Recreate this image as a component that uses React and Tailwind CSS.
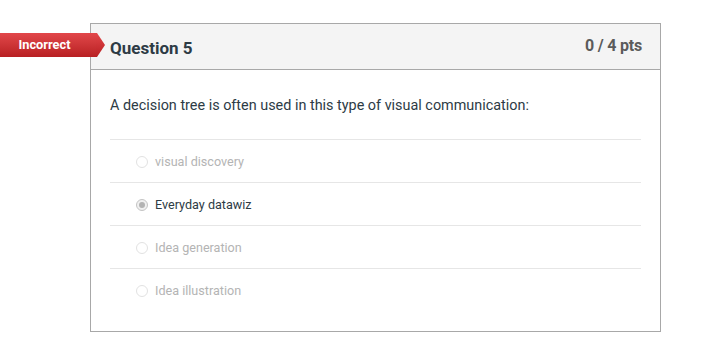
const answers = [
  { label: 'visual discovery', selected: false },
  { label: 'Everyday datawiz', selected: true },
  { label: 'Idea generation', selected: false },
  { label: 'Idea illustration', selected: false },
];

function Badge() {
  return (
    <div className="absolute left-0 top-[10px] flex h-[24px] items-center">
      <div className="flex h-full w-[96px] items-center justify-center bg-gradient-to-b from-[#e2474a] to-[#b81f22] pr-[7px] text-[12.8px] font-bold text-white">
        Incorrect
      </div>
      <svg width="9" height="24" viewBox="0 0 9 24" className="block">
        <defs>
          <linearGradient id="bg" x1="0" y1="0" x2="0" y2="1">
            <stop offset="0" stopColor="#e2474a" />
            <stop offset="1" stopColor="#b81f22" />
          </linearGradient>
        </defs>
        <polygon points="0,0 1,0 9,12 1,24 0,24" fill="url(#bg)" />
      </svg>
    </div>
  );
}

export default function App() {
  return (
    <main className="min-h-screen bg-white pt-[23px] font-['Roboto','Liberation_Sans',sans-serif]">
      <div className="relative">
        <Badge />
        <section className="ml-[90px] w-[571px] border border-[#a8a8a8]">
          <div className="flex h-[46px] items-center justify-between border-b border-[#a8a8a8] bg-[#f4f4f4] pl-[19px] pr-[18px]">
            <h2 className="pt-[4px] text-[17px] font-bold text-[#2d3b45]">Question 5</h2>
            <p className="pb-[2px] text-[16px] font-bold tracking-[-0.2px] text-[#5b5b5b]">0 / 4 pts</p>
          </div>
          <div className="px-[19px] pb-[20px] pt-[26px]">
            <p className="mb-[23px] text-[14.4px] leading-[20px] text-[#2d3b45]">
              A decision tree is often used in this type of visual communication:
            </p>
            {answers.map((item) => (
              <div key={item.label} className="flex h-[43px] items-center border-t border-[#e6e6e6] pl-[26px] pt-[2px]">
                <span
                  className={`mr-[7px] flex h-[12px] w-[12px] items-center justify-center rounded-full border ${
                    item.selected ? 'border-[#c4c4c4] bg-[#f0f0f0]' : 'border-[#e2e2e2] bg-white'
                  }`}
                >
                  {item.selected ? <span className="h-[6px] w-[6px] rounded-full bg-[#b3b3b3]" /> : null}
                </span>
                <span className={`text-[12.6px] ${item.selected ? 'text-[#2d3b45]' : 'text-[#b4b4b4]'}`}>{item.label}</span>
              </div>
            ))}
          </div>
        </section>
      </div>
    </main>
  );
}
